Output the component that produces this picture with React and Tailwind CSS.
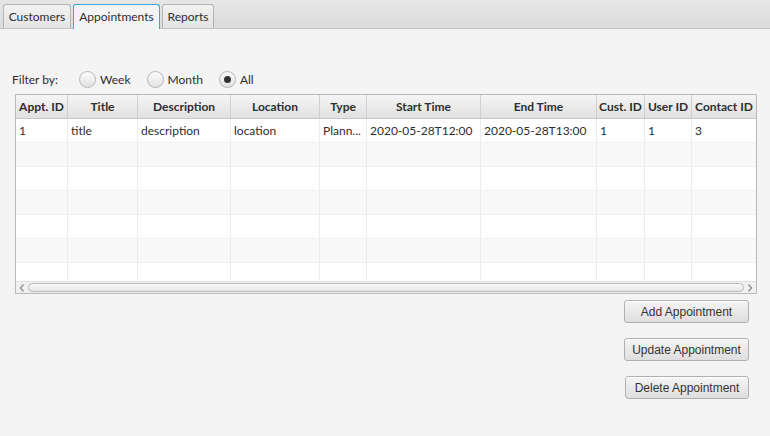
import React from "react";

const cols = [
  { name: "Appt. ID", w: "w-[52px]", v: "1" },
  { name: "Title", w: "w-[70px]", v: "title" },
  { name: "Description", w: "w-[93px]", v: "description" },
  { name: "Location", w: "w-[89px]", v: "location" },
  { name: "Type", w: "w-[47px]", v: "Plann..." },
  { name: "Start Time", w: "w-[114px]", v: "2020-05-28T12:00" },
  { name: "End Time", w: "w-[116px]", v: "2020-05-28T13:00" },
  { name: "Cust. ID", w: "w-[48px]", v: "1" },
  { name: "User ID", w: "w-[47px]", v: "1" },
  { name: "Contact ID", w: "w-[64px]", v: "3", last: true },
];

const font = "font-['Segoe_UI','Lato','Liberation_Sans',sans-serif]";

function Radio({ label, checked }) {
  return (
    <div className="flex items-center gap-[4px]">
      <div className="w-[17px] h-[17px] rounded-full border border-[#b5b5b5] bg-gradient-to-b from-[#fcfcfc] to-[#e2e2e2] flex items-center justify-center">
        {checked && <div className="w-[7px] h-[7px] rounded-full bg-[#333]" />}
      </div>
      <span>{label}</span>
    </div>
  );
}

function Button({ children, w }) {
  return (
    <button className={`${w} h-[23px] rounded-[3px] border border-[#b0b0b0] bg-gradient-to-b from-[#f5f5f5] to-[#dedede] text-[12px] text-[#333] font-['Liberation_Sans',sans-serif] shadow-[inset_0_1px_0_#ffffff]`}>
      {children}
    </button>
  );
}

export default function App() {
  const rows = [0, 1, 2, 3, 4, 5, 6];
  return (
    <div className={`w-[770px] h-[436px] bg-[#f4f4f4] ${font} text-[12px] text-[#2e2e2e] overflow-hidden`}>
      {/* Tab bar */}
      <div className="h-[29px] bg-gradient-to-b from-[#e6e6e6] to-[#dcdcdc] border-b border-[#c2c2c2] flex items-end pl-[3px] gap-[2px]">
        <div className="w-[68px] h-[24px] rounded-t-[3px] border border-b-0 border-[#b4b4b4] bg-gradient-to-b from-[#f2f2f2] to-[#e4e4e4] flex items-center justify-center">
          Customers
        </div>
        <div className="w-[87px] h-[25px] -mb-px rounded-t-[3px] border border-b-0 border-[#3aa7d6] bg-[#f4f4f4] flex items-center justify-center">
          Appointments
        </div>
        <div className="w-[52px] h-[24px] rounded-t-[3px] border border-b-0 border-[#b4b4b4] bg-gradient-to-b from-[#f2f2f2] to-[#e4e4e4] flex items-center justify-center">
          Reports
        </div>
      </div>

      {/* Filter row */}
      <div className="flex items-center pl-[12px] pt-[42px] h-[59px]">
        <span className="mr-[21px]">Filter by:</span>
        <div className="flex items-center gap-[16px]">
          <Radio label="Week" />
          <Radio label="Month" />
          <Radio label="All" checked />
        </div>
      </div>

      {/* Table */}
      <div className="ml-[15px] mt-[6px] w-[742px] h-[200px] border border-[#b9b9b9] bg-white flex flex-col overflow-hidden">
        <div className="flex h-[24px] border-b border-[#c8c8c8] bg-gradient-to-b from-[#f5f5f5] to-[#e1e1e1]">
          {cols.map((c) => (
            <div
              key={c.name}
              className={`${c.w} shrink-0 h-full flex items-center justify-center font-bold whitespace-nowrap overflow-hidden ${c.last ? "" : "border-r border-[#cfcfcf]"}`}
            >
              {c.name}
            </div>
          ))}
        </div>
        <div className="h-[162px] overflow-hidden">
          {rows.map((r) => (
            <div
              key={r}
              className={`flex h-[24px] border-b border-[#f0f0f0] ${r % 2 === 1 ? "bg-[#f9f9f9]" : "bg-white"}`}
            >
              {cols.map((c) => (
                <div
                  key={c.name}
                  className={`${c.w} shrink-0 h-full flex items-center px-[3px] whitespace-nowrap overflow-hidden ${c.last ? "" : "border-r border-[#ececec]"}`}
                >
                  {r === 0 ? c.v : ""}
                </div>
              ))}
            </div>
          ))}
        </div>
        {/* horizontal scrollbar */}
        <div className="h-[12px] flex items-center bg-[#f0f0f0] border-t border-[#e2e2e2]">
          <div className="w-[12px] flex items-center justify-center">
            <svg width="6" height="8" viewBox="0 0 6 8">
              <path d="M4.5 0.5 L1.5 4 L4.5 7.5" fill="none" stroke="#8a8a8a" strokeWidth="1.2" />
            </svg>
          </div>
          <div className="flex-1 h-[9px] rounded-[5px] border border-[#b9b9b9] bg-gradient-to-b from-[#fafafa] to-[#e6e6e6]" />
          <div className="w-[12px] flex items-center justify-center">
            <svg width="6" height="8" viewBox="0 0 6 8">
              <path d="M1.5 0.5 L4.5 4 L1.5 7.5" fill="none" stroke="#8a8a8a" strokeWidth="1.2" />
            </svg>
          </div>
        </div>
      </div>

      {/* Buttons */}
      <div className="flex flex-col items-end pr-[21px] pt-[6px] gap-[15px]">
        <Button w="w-[125px]">Add Appointment</Button>
        <Button w="w-[125px]">Update Appointment</Button>
        <Button w="w-[124px]">Delete Appointment</Button>
      </div>
    </div>
  );
}
